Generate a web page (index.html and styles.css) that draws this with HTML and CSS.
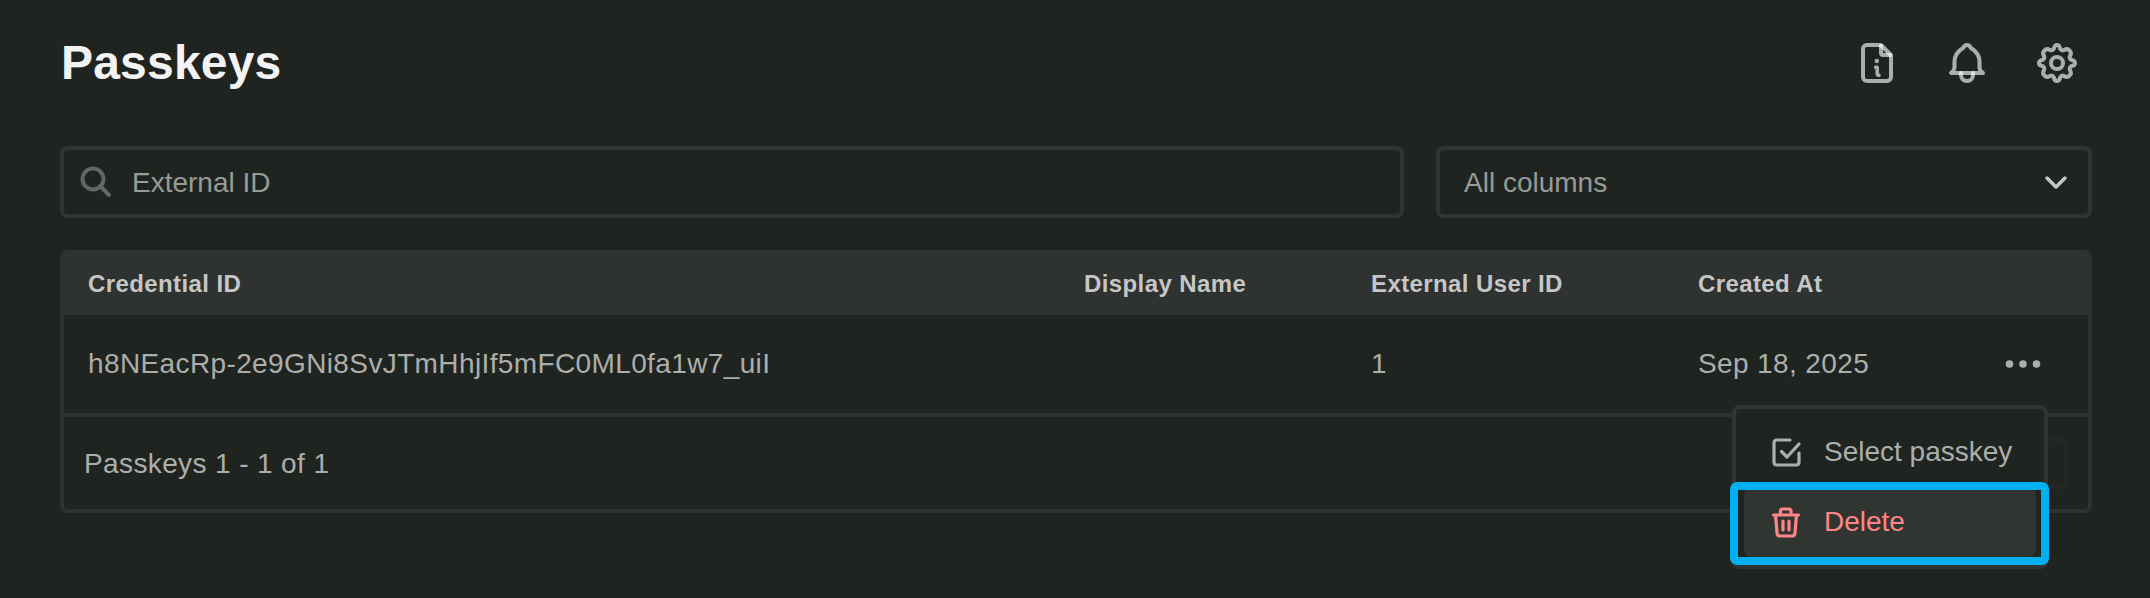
FILE: index.html
```html
<!DOCTYPE html>
<html lang="en">
<head>
<meta charset="utf-8">
<title>Passkeys</title>
<link rel="stylesheet" href="styles.css">
</head>
<body>
<main class="page">
  <header class="header">
    <h1 class="title">Passkeys</h1>
    <nav class="actions">
      <svg class="action-icon" viewBox="0 0 40 40"><path d="M22.500 2H10a4 4 0 0 0-4 4v28a4 4 0 0 0 4 4h20a4 4 0 0 0 4-4V13.500Q34 12 33 11L25 3Q24 2 22.500 2Z"/><path d="M24 2.500V10Q24 12 26 12H33.500"/><path class="thin" d="M18.500 24.200H20.200V30.500Q20.200 32.700 22 32.300"/><circle class="dot" cx="19.800" cy="18" r="2.200"/></svg>
      <svg class="action-icon" viewBox="0 0 40 40"><path d="M4 30H36Q33 28 32.500 25V18Q32 10 24 5Q22.500 2 20 2Q17.500 2 16 5Q8 10 7.500 18V25Q7 28 4 30Z"/><path d="M14 30V32a6 6 0 0 0 12 0V30"/></svg>
      <svg class="action-icon" viewBox="0 0 40 40"><circle cx="20" cy="20" r="6"/><path d="M20 2Q22.500 2 23.300 6Q25 8 27 7Q30.500 5 32.500 7.500Q35 9.500 33 13Q32 15 34 16.700Q38 17.500 38 20Q38 22.500 34 23.300Q32 25 33 27Q35 30.500 32.500 32.500Q30.500 35 27 33Q25 32 23.300 34Q22.500 38 20 38Q17.500 38 16.700 34Q15 32 13 33Q9.500 35 7.500 32.500Q5 30.500 7 27Q8 25 6 23.300Q2 22.500 2 20Q2 17.500 6 16.700Q8 15 7 13Q5 9.500 7.500 7.500Q9.500 5 13 7Q15 8 16.700 6Q17.500 2 20 2Z"/></svg>
    </nav>
  </header>
  <section class="filters">
    <div class="field search">
      <svg class="search-icon" viewBox="0 0 32 32"><circle cx="13" cy="13" r="10.500"/><path d="M20 20L29 29"/></svg>
      <span>External ID</span>
    </div>
    <div class="field select">
      <span>All columns</span>
      <svg class="chevron" viewBox="0 0 24 16"><path d="M3 4l9 9 9-9"/></svg>
    </div>
  </section>
  <section class="table">
    <div class="grid head">
      <span>Credential ID</span><span>Display Name</span><span>External User ID</span><span>Created At</span><span></span>
    </div>
    <div class="grid row">
      <span>h8NEacRp-2e9GNi8SvJTmHhjIf5mFC0ML0fa1w7_uiI</span><span></span><span>1</span><span>Sep 18, 2025</span>
      <svg class="more" viewBox="0 0 36 8"><circle cx="4.500" cy="4" r="3.800"/><circle cx="18" cy="4" r="3.800"/><circle cx="31.500" cy="4" r="3.800"/></svg>
    </div>
    <div class="foot"><span>Passkeys 1 - 1 of 1</span><span class="pager"></span></div>
  </section>
</main>
<div class="menu">
  <div class="item">
    <svg class="item-icon" viewBox="0 0 32 32"><path d="M20 4H7Q4 4 4 7V26Q4 29 7 29H26Q29 29 29 26V17"/><path d="M11.500 15.500l5.500 5.500L29 8"/></svg>
    <span>Select passkey</span>
  </div>
  <div class="item danger">
    <svg class="item-icon" viewBox="0 0 32 32"><path d="M3.500 9H28.500M10.500 8V5Q10.500 3 12.500 3H19Q21 3 21 5V8M5.500 9L7 27Q7.300 30 10 30H22Q24.700 30 25 27L26.500 9M13 15V24M19 15V24"/></svg>
    <span>Delete</span>
  </div>
</div>
<div class="highlight"></div>
</body>
</html>
```
FILE: styles.css
```css
* { box-sizing: border-box; }
body {
  margin: 0;
  height: 598px;
  overflow: hidden;
  position: relative;
  background: #202421;
  color: #acaeac;
  font: 28px/40px "Liberation Sans", Arial, sans-serif;
}
svg { fill: none; stroke: currentColor; stroke-linecap: round; stroke-linejoin: round; flex: none; display: block; }
.page { padding: 32px 58px 0 60px; }
.header { height: 62px; display: flex; justify-content: space-between; align-items: center; }
.title { margin: 0; padding-left: 1px; font-size: 48px; line-height: 62px; font-weight: 700; letter-spacing: .2px; color: #f3f3f3; }
.actions { display: flex; gap: 50px; padding-right: 15px; color: rgba(255, 255, 255, .63); }
.action-icon { width: 40px; height: 40px; stroke-width: 4; }
.thin { stroke-width: 3.500; }
.dot { fill: currentColor; stroke: none; }
.filters { display: grid; grid-template-columns: 1344px 656px; gap: 32px; margin-top: 52px; }
.field { height: 72px; border: 4px solid #313532; border-radius: 8px; display: flex; align-items: center; color: #979b98; }
.field span { padding-top: 2px; }
.search { padding-left: 16px; gap: 20px; }
.search-icon { width: 32px; height: 32px; stroke-width: 4; color: #646665; }
.select { padding: 0 20px 0 24px; justify-content: space-between; }
.chevron { width: 24px; height: 16px; stroke-width: 3.500; color: #c4c6c4; }
.table { margin-top: 32px; height: 263px; border: 4px solid #2e3231; border-radius: 8px; letter-spacing: .38px; }
.grid { display: grid; grid-template-columns: 996px 287px 327px 307px 1fr; padding-left: 24px; align-items: center; }
.head { height: 61px; padding-bottom: 2px; background: #2e3231; color: #c5c6c5; font-size: 24px; font-weight: 700; letter-spacing: .4px; }
.row { height: 102px; border-bottom: 4px solid #2e3231; }
.more { width: 36px; height: 8px; fill: currentColor; stroke: none; }
.foot { height: 92px; display: flex; justify-content: space-between; align-items: center; padding: 2px 20px 0 20px; }
.pager { width: 52px; height: 52px; margin-bottom: 2px; border: 4px solid #252926; border-radius: 8px; }
.menu { position: absolute; left: 1732px; top: 405px; width: 316px; height: 164px; border: 4px solid #313532; border-radius: 8px; background: #202421; padding: 8px; }
.item { height: 70px; display: flex; align-items: center; gap: 22px; padding-left: 26px; border-radius: 8px; }
.item-icon { width: 32px; height: 32px; stroke-width: 3.200px; }
.danger { background: #313532; color: #ff8686; }
.highlight { position: absolute; left: 1730px; top: 482px; width: 319px; height: 83px; border: 8px solid #00b0f0; border-radius: 7px; }
```
